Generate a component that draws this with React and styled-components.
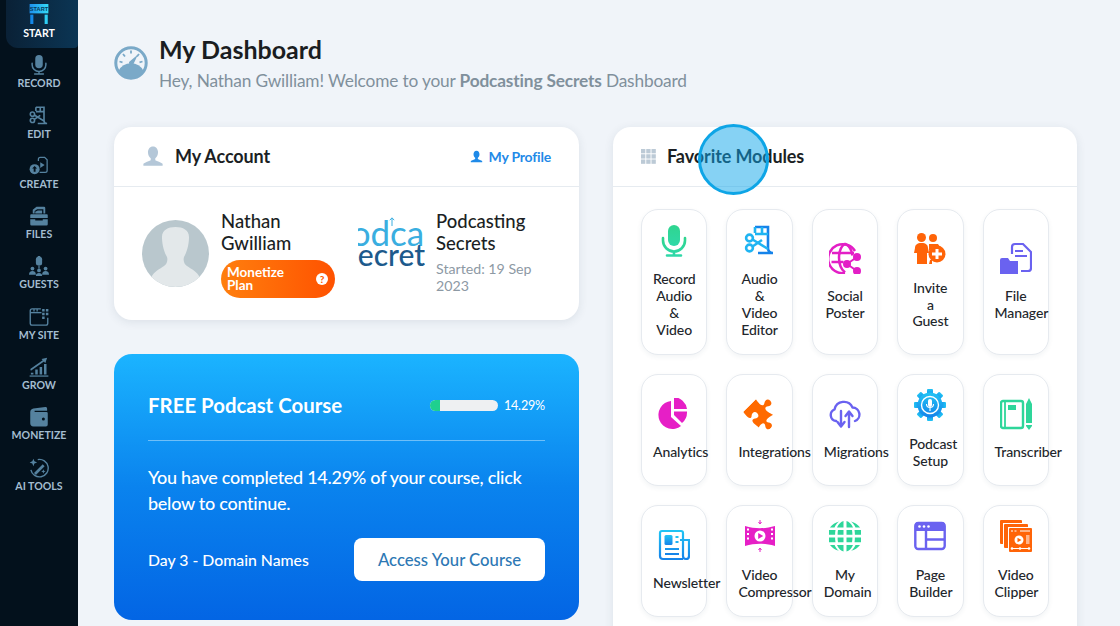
import React from "react";
import styled, { createGlobalStyle } from "styled-components";
import { FaPuzzlePiece } from "react-icons/fa";

const FONT = `"Lato", "Noto Sans", sans-serif`;

const Global = createGlobalStyle`
  html, body { margin: 0; padding: 0; height: 100%; overflow: hidden; background: #f0f4f9; }
  * { box-sizing: border-box; }
  body { font-family: ${FONT}; color: #1b1f24; }
`;

const Page = styled.div`display: flex; height: 626px; width: 1120px; overflow: hidden; position: relative;`;
const Sidebar = styled.nav`width: 78px; flex: none; background: #03111c; display: flex; flex-direction: column;`;
const NavItem = styled.div`
  position: relative; height: 50.3px; padding-top: ${p => (p.$active ? 4 : 5)}px;
  display: flex; flex-direction: column; align-items: center;
  color: ${p => (p.$active ? "#ffffff" : "#a3bdd0")};
  &::before {
    content: ""; display: ${p => (p.$active ? "block" : "none")};
    position: absolute; left: 6px; right: 0; top: 0; height: 48px;
    border-radius: 0 0 4px 12px; background: linear-gradient(90deg, #0a2136, #0b3554);
  }
`;
const NavIcon = styled.svg`width: 20px; height: 20px; position: relative; flex: none; margin-bottom: ${p => (p.$active ? 2 : 1)}px;`;
const NavLabel = styled.span`position: relative; font-size: 10.6px; line-height: 14px; font-weight: 700; white-space: nowrap;`;

const Main = styled.main`flex: 1; min-width: 0; padding: 34px 43px 0 36px;`;
const Header = styled.header`display: flex; align-items: center; gap: 11px; margin-bottom: 35px;`;
const HeaderText = styled.div`display: flex; flex-direction: column; gap: 6px;`;
const Title = styled.h1`margin: 0; font-size: 25px; line-height: 30px; font-weight: 700; color: #1a1d21;`;
const Subtitle = styled.p`margin: 0; font-size: 17.3px; line-height: 22px; letter-spacing: -0.16px; color: #80909c; b { font-weight: 700; }`;
const Gauge = styled.svg`width: 34px; height: 34px; flex: none;`;

const Columns = styled.div`display: grid; grid-template-columns: 465px 464px; gap: 34px; align-items: start;`;
const LeftCol = styled.div`display: flex; flex-direction: column; gap: 34px;`;
const Card = styled.section`background: #fff; border-radius: 18px; box-shadow: 0 2px 10px rgba(40,60,80,.1);`;
const CardHead = styled.div`
  height: 60px; padding: 0 28px 1px; display: flex; align-items: center; gap: 11px;
  border-bottom: 1px solid #e6ebf0;
`;
const CardTitle = styled.h2`margin: 0; flex: 1; font-size: 18px; letter-spacing: -0.1px; font-weight: 700; color: #1b1f24;`;
const ProfileLink = styled.a`display: flex; align-items: center; gap: 6px; font-size: 14px; letter-spacing: -0.2px; font-weight: 700; color: #1f8ae8;`;
const HeadIcon = styled.svg`width: ${p => p.$s || 22}px; height: ${p => p.$s || 22}px; flex: none;`;

const AccountBody = styled.div`display: grid; grid-template-columns: 204px 1fr; column-gap: 12px; padding: 22px 28px 22px;`;
const Person = styled.div`display: flex; align-items: ${p => p.$align || "center"}; gap: ${p => p.$gap}px; min-width: 0;`;
const Avatar = styled.svg`width: 67px; height: 67px; border-radius: 50%; flex: none;`;
const PersonInfo = styled.div`min-width: 0; display: flex; flex-direction: column; padding-top: 1px;`;
const PersonName = styled.div`font-size: 18.5px; line-height: 22px; font-weight: 500; color: #1b1f24;`;
const PlanBadge = styled.div`
  margin-top: 6px; width: 114px; height: 38px; border-radius: 19px; padding: 0 7px 0 6px;
  display: flex; align-items: center; justify-content: space-between;
  background: linear-gradient(90deg, #ff7f0e, #ff5200);
  color: #fff; font-size: 13.5px; line-height: 13.5px; font-weight: 700;
`;
const HelpDot = styled.span`
  width: 12px; height: 12px; border-radius: 50%; background: #fff; color: #ff5a00;
  font-size: 10px; line-height: 12px; font-weight: 900; text-align: center; flex: none;
`;
const Logo = styled.div`
  position: relative; width: 67px; height: 67px; flex: none; overflow: hidden;
  display: flex; flex-direction: column; align-items: center; justify-content: center;
`;
const LogoWord = styled.span`font-size: ${p => p.$s}px; line-height: 22px; font-weight: ${p => p.$w}; color: ${p => p.$c}; white-space: nowrap;`;
const LogoArrow = styled.svg`position: absolute; left: 31px; top: 8px; width: 6px; height: 9px;`;
const Started = styled.div`margin-top: 5.5px; font-size: 14.2px; line-height: 17px; color: #8d99a4;`;

const Course = styled.section`
  height: 266px; border-radius: 18px; padding: 37px 34px 0; color: #fff;
  background: linear-gradient(180deg, #1bb4ff 0%, #0a83ee 50%, #0365e4 100%);
`;
const CourseTop = styled.div`
  display: flex; align-items: center; height: 50px; padding-bottom: 21px;
  border-bottom: 1px solid rgba(255,255,255,.4);
`;
const CourseTitle = styled.h2`margin: 0; flex: 1; font-size: 20.4px; font-weight: 700;`;
const Track = styled.div`width: 68px; height: 11px; border-radius: 6px; background: #eef0f2; overflow: hidden;`;
const Fill = styled.div`height: 100%; background: #1fd08f;`;
const Percent = styled.span`margin-left: 6px; font-size: 12.6px; letter-spacing: -0.2px;`;
const CourseText = styled.p`margin: 23px 0 22px; font-size: 18px; letter-spacing: -0.27px; line-height: 26px; font-weight: 500;`;
const CourseFoot = styled.div`display: flex; align-items: center; justify-content: space-between;`;
const Day = styled.span`font-size: 15.8px; font-weight: 500;`;
const AccessButton = styled.button`
  width: 191px; height: 43px; border: 0; border-radius: 8px; background: #fff; color: #2d78b4;
  font-family: ${FONT}; font-size: 16.7px; font-weight: 500;
`;

const Modules = styled.div`
  display: grid; grid-template-columns: repeat(5, 1fr); column-gap: 19px; row-gap: 19px; padding: 22px 28px 30px;
`;
const Tile = styled.div`
  border: 1px solid #e6eaef; border-radius: 17px; padding: 14.9px 11px;
  display: flex; flex-direction: column; align-items: center; justify-content: center;
  box-shadow: 0 2px 5px rgba(40,60,80,.06); background: #fff; min-width: 0;
`;
const TileIcon = styled.svg`width: 32px; height: 32px; flex: none; margin-bottom: 14.6px;`;
const PuzzleWrap = styled.span`
  width: 32px; height: 32px; flex: none; margin-bottom: 14.6px; color: #ff6a00; font-size: 31px;
  display: flex; align-items: center; justify-content: center; svg { transform: translateX(4px) rotate(45deg); }
`;
const TileLabel = styled.div`width: 100%; font-size: 14px; line-height: 16.8px; letter-spacing: -0.1px; font-weight: 500; color: #22262b; text-align: center;`;
const Line = styled.span`display: block; white-space: nowrap;`;

const Pointer = styled.div`
  position: absolute; left: 698px; top: 124px; width: 71px; height: 71px; border-radius: 50%;
  border: 3px solid #0ea5e6; background: rgba(14,165,233,.5);
`;
const Defs = styled.svg`position: absolute; width: 0; height: 0;`;

/* ---------- drawings ---------- */
const Mic = ({ c, s = 2.4 }) => (
  <g>
    <rect x="10" y="0" width="12" height="21" rx="6" fill={c} />
    <path d="M5 13v2.5a11 11 0 0 0 22 0V13M16 26.5V30M9 30.5h14" fill="none" stroke={c} strokeWidth={s} strokeLinecap="round" />
  </g>
);
const EditDoc = ({ c, c2 = c }) => (
  <g fill="none" stroke={c} strokeWidth="2.6">
    <path d="M11 2h13v21c0 3 2 5 5 5H14" stroke={c2} />
    <path d="M11 2v6M11 9h13M18 2v7" />
    <circle cx="5.5" cy="13" r="3.4" />
    <circle cx="5.5" cy="23" r="3.4" />
    <path d="M8.5 14.5L24 24M8.5 21.5L18 15" />
  </g>
);
const Create = ({ c }) => (
  <g>
    <path d="M15 8V5a3 3 0 0 1 3-3h7l4 4v17a3 3 0 0 1-3 3H17" fill="none" stroke={c} strokeWidth="2" />
    <path d="M18 10l7 4.5-7 4.5z" fill={c} />
    <circle cx="9" cy="21" r="8" fill={c} />
    <path d="M9 16l4 4h-2.5v5h-3v-5H5z" fill="#03111c" />
  </g>
);
const Files = ({ c }) => (
  <g fill={c}>
    <path d="M6 12V6l6-5h12a2 2 0 0 1 2 2v9h-3V5H13l-4 3v4z" />
    <path d="M10 9l4-2h7v5H10z" />
    <path d="M3 13h26a2 2 0 0 1 1 2v4H2v-4a2 2 0 0 1 1-2z" />
    <path d="M2 21h8v2h12v-2h8v8a2 2 0 0 1-2 2H4a2 2 0 0 1-2-2z" />
  </g>
);
const Guests = ({ c }) => (
  <g fill={c}>
    <rect x="11" y="1" width="10" height="14" rx="4" />
    <path d="M14 0h4v2h-4z" />
    <circle cx="5.5" cy="20" r="3" /><path d="M0 30c0-4 2-6 5.5-6s5.5 2 5.5 6z" />
    <circle cx="26.5" cy="20" r="3" /><path d="M21 30c0-4 2-6 5.5-6s5.5 2 5.5 6z" />
    <circle cx="16" cy="23" r="3" /><path d="M11 32c0-4 2-5 5-5s5 1 5 5z" />
    <path d="M15 15h2v5h-2z" />
  </g>
);
const Site = ({ c }) => (
  <g>
    <path d="M30 17v9a3 3 0 0 1-3 3H5a3 3 0 0 1-3-3V6a3 3 0 0 1 3-3h14" fill="none" stroke={c} strokeWidth="2.2" />
    <path d="M2 9h18" stroke={c} strokeWidth="2.2" />
    <path d="M7 3h2v4H7zM12 3h2v4h-2z" fill={c} />
    <path d="M21 3h4v4h-4zM27 3h4v4h-4zM21 9h4v4h-4zM27 9h4v4h-4zM21 15h4v4h-4z" fill={c} />
  </g>
);
const Grow = ({ c }) => (
  <g fill={c}>
    <path d="M2 19L22 5l-2-2 9-2-3 9-2-3L3 22z" />
    <path d="M3 25h4v3H3zM10 20h4v8h-4zM17 16h4v12h-4zM24 11h4v17h-4z" />
    <path d="M1 29.5h30v2H1z" />
  </g>
);
const Wallet = ({ c }) => (
  <g>
    <path d="M2 8c0-3 2-5 5-5.5L26 0c2 0 3 1 3 3v3H9v2h19a2 2 0 0 1 2 2v18a3 3 0 0 1-3 3H7a5 5 0 0 1-5-5z" fill={c} />
    <circle cx="23" cy="19" r="2.4" fill="#03111c" />
  </g>
);
const AiTools = ({ c }) => (
  <g>
    <path d="M14 2.5A14 14 0 1 1 3 19" fill="none" stroke={c} strokeWidth="2.2" />
    <path d="M8 24L22 10l3 3L11 27z" fill={c} />
    <path d="M7 1l1.7 4.3L13 7l-4.3 1.7L7 13 5.3 8.7 1 7l4.3-1.7zM23 18l1 2.5 2.500 1-2.500 1-1 2.500-1-2.500-2.500-1 2.500-1z" fill={c} />
  </g>
);
const StartSign = () => (
  <g>
    <rect x="1" y="0" width="30" height="15" fill="url(#gCyan)" />
    <text x="16" y="11" fontSize="9" fontWeight="700" fill="#053a5c" textAnchor="middle" fontFamily="Liberation Sans Narrow, Liberation Sans, sans-serif">START</text>
    <rect x="2" y="17" width="5" height="15" fill="#1588e8" />
    <rect x="25" y="17" width="5" height="15" fill="#2fd0f5" />
  </g>
);
const SocialGlobe = ({ c }) => (
  <g fill="none" stroke={c} strokeWidth="2.5">
    <path d="M26 9A14.500 14.500 0 1 0 16 31" />
    <path d="M16 1.500c-8 6-8 22 0 29M16 1.500c5 3 7 8 7.500 12" />
    <path d="M3 11h22M2.500 20h12" />
    <g fill={c} stroke="none">
      <circle cx="28" cy="15" r="4" /><circle cx="18" cy="22" r="4" /><circle cx="28" cy="29" r="4" />
    </g>
    <path d="M28 15l-10 7 10 7" strokeWidth="2" />
  </g>
);
const InviteGuest = ({ c }) => (
  <g fill={c}>
    <circle cx="7.500" cy="4.500" r="4.500" />
    <circle cx="19" cy="5" r="4" />
    <path d="M1 15c0-3 2-5 6.500-5s6.500 2 6.500 5l1 5-2 0v11H3V20H0z" />
    <path d="M15 11h9l2 3h-7l-4 4z" />
    <path d="M16 27h2v4h-3z" />
    <circle cx="23" cy="21" r="8.500" />
    <path d="M21.500 16h3v3.500H28v3h-3.500V26h-3v-3.500H18v-3h3.500z" fill="#fff" />
  </g>
);
const FileMgr = ({ c }) => (
  <g>
    <path d="M12 12V5a3 3 0 0 1 3-3h8l8 8v16a3 3 0 0 1-3 3h-7" fill="none" stroke={c} strokeWidth="2.2" />
    <path d="M15 9h8M15 14h12" stroke={c} strokeWidth="2.2" />
    <path d="M0 18a2 2 0 0 1 2-2h6l2 3h8v13H0z" fill={c} />
  </g>
);
const Pie = ({ c }) => (
  <g fill={c}>
    <path d="M13 4v16l10 9A14 14 0 1 1 13 4z" transform="translate(0 -1)" />
    <path d="M16 0a14 14 0 0 1 13 12H16zM16 14.500h13A14 14 0 0 1 24 26l-8-8z" transform="translate(0 -1)" />
  </g>
);
const CloudSync = ({ c }) => (
  <g fill="none" stroke={c} strokeWidth="2.4" strokeLinecap="round" strokeLinejoin="round">
    <path d="M7 23A6 6 0 0 1 5.500 11.500 9.500 9.500 0 0 1 23.500 9.500 7 7 0 0 1 26 23" />
    <path d="M12 13v15M8.500 24l3.500 4.500 3.500-4.500M20 29V14M16.500 18l3.500-4.500 3.500 4.500" />
  </g>
);
const GearMic = ({ c }) => (
  <g>
    {[0, 45, 90, 135, 180, 225, 270, 315].map(a => (
      <rect key={a} x="13" y="0" width="6" height="7" rx="1" fill={c} transform={`rotate(${a} 16 16)`} />
    ))}
    <circle cx="16" cy="16" r="12.500" fill={c} />
    <circle cx="16" cy="16" r="8.500" fill="none" stroke="#fff" strokeWidth="1.4" />
    <rect x="14" y="10" width="4" height="8" rx="2" fill="#fff" />
    <path d="M12.500 15a3.500 3.500 0 0 0 7 0M16 18.500V22" fill="none" stroke="#fff" strokeWidth="1.100" />
  </g>
);
const Transcriber = ({ c }) => (
  <g>
    <path d="M3 3h18a2 2 0 0 1 2 2v23a2 2 0 0 1-2 2H3a2 2 0 0 1-2-2V5a2 2 0 0 1 2-2z" fill="none" stroke={c} strokeWidth="2.400" />
    <path d="M5 3v27" stroke={c} strokeWidth="1.800" />
    <rect x="8" y="7" width="8" height="5" fill={c} />
    <path d="M26 6l3-6 3 6v19h-6zM26 27h6v1l-3 4-3-4z" fill={c} />
  </g>
);
const News = ({ c }) => (
  <g>
    <path d="M25 30H5a3 3 0 0 1-3-3V4a2 2 0 0 1 2-2h19a2 2 0 0 1 2 2v23a3 3 0 0 0 6 0V11h-9" fill="none" stroke={c} strokeWidth="2.200" />
    <rect x="6.500" y="6" width="8" height="10" rx="1.500" fill={c} />
    <path d="M17.500 8h3M17.500 13h3M7 20h14M7 25h14" stroke={c} strokeWidth="2" />
  </g>
);
const Compress = ({ c }) => (
  <g>
    <path d="M1 6c10 3 20 3 30 0v20c-10-3-20-3-30 0z" fill={c} />
    <g fill="#fff">
      {[9.500, 14, 18.500].map(y => <rect key={"a" + y} x="3" y={y - 1} width="2" height="2" />)}
      {[9.500, 14, 18.500].map(y => <rect key={"b" + y} x="27" y={y - 1} width="2" height="2" />)}
    </g>
    <circle cx="16" cy="16" r="5.500" fill="#fff" />
    <path d="M14.200 13l5 3-5 3z" fill={c} />
    <path d="M16 0v3M14.500 2L16 4l1.500-2M16 32v-3M14.500 30l1.500-2 1.500 2" fill="none" stroke={c} strokeWidth="1" />
  </g>
);
const DomainGlobe = ({ c }) => (
  <g fill={c}>
    <path d="M14.500 1v6.500H8C9.500 4 12 1.600 14.500 1zM17.500 1c2.500.6 5 3 6.500 6.500h-6.500zM5.500 7.500H.9A16 16 0 0 1 10 1.500C8 3 6.500 5 5.500 7.500zM26.500 7.500h4.600A16 16 0 0 0 22 1.500c2 1.500 3.500 3.500 4.500 6z" />
    <path d="M0 10h6.500c-.3 1.800-.4 3.500-.4 4.800H0zM9 10h5.500v4.800H8.600c0-1.600.1-3.200.4-4.800zM17.500 10H23c.3 1.600.4 3.200.4 4.800h-5.900zM25.500 10H32v4.800h-6.100c0-1.300-.1-3-.4-4.800z" />
    <path d="M0 17.500h6.100c0 1.500.1 3.100.4 4.700H0zM8.600 17.500h5.900v4.700H9c-.3-1.500-.4-3.100-.4-4.700zM17.500 17.500h5.900c0 1.600-.1 3.200-.4 4.700h-5.500zM25.900 17.500H32v4.700h-6.500c.3-1.600.4-3.200.4-4.700z" />
    <path d="M1 25h4.600c1 2.500 2.400 4.500 4.400 5.800A16 16 0 0 1 1 25zM8 25h6.500v6.500C12 31 9.500 28.500 8 25zM17.500 25H24c-1.500 3.500-4 6-6.500 6.500zM26.500 25H31a16 16 0 0 1-9 5.800c2-1.300 3.400-3.300 4.500-5.800z" />
  </g>
);
const PageB = ({ c }) => (
  <g>
    <rect x="1.300" y="3" width="29.400" height="26" rx="3" fill="none" stroke={c} strokeWidth="2.400" />
    <path d="M1 5a3 3 0 0 1 3-3h24a3 3 0 0 1 3 3v6H1z" fill={c} />
    <g fill="#fff"><circle cx="5.500" cy="6.500" r="1.300" /><circle cx="10" cy="6.500" r="1.300" /><circle cx="14.500" cy="6.500" r="1.300" /></g>
    <path d="M12 11v18M12 19.500h19" stroke={c} strokeWidth="2.400" />
  </g>
);
const Clipper = ({ c }) => (
  <g>
    <rect x="0" y="0" width="22" height="24" rx="1" fill={c} />
    <rect x="3" y="3" width="26" height="26" fill="#fff" />
    <rect x="4" y="4" width="24" height="24" rx="1" fill={c} />
    <rect x="8" y="7" width="24" height="25" fill="#fff" />
    <rect x="9" y="8" width="23" height="24" rx="1" fill={c} />
    <path d="M11 11h2M14.500 11h2M20 11h10" stroke="#fff" strokeWidth="1" />
    <circle cx="19" cy="20" r="4.500" fill="#fff" />
    <path d="M17.500 17.700l4 2.300-4 2.300z" fill={c} />
    <rect x="26" y="15" width="3.500" height="9" fill="#ffb48a" />
    <path d="M11 28.500h19" stroke="#fff" strokeWidth="1" />
    <circle cx="12" cy="28.500" r="1.300" fill="#fff" /><circle cx="20" cy="28.500" r="1.300" fill="#fff" /><circle cx="29" cy="28.500" r="1.300" fill="#fff" />
  </g>
);

const NAV_BLUE = "#55829f";
const nav = [
  { label: "START", active: true, draw: <StartSign /> },
  { label: "RECORD", draw: <Mic c={NAV_BLUE} /> },
  { label: "EDIT", draw: <EditDoc c={NAV_BLUE} /> },
  { label: "CREATE", draw: <Create c={NAV_BLUE} /> },
  { label: "FILES", draw: <Files c={NAV_BLUE} /> },
  { label: "GUESTS", draw: <Guests c={NAV_BLUE} /> },
  { label: "MY SITE", draw: <Site c={NAV_BLUE} /> },
  { label: "GROW", draw: <Grow c={NAV_BLUE} /> },
  { label: "MONETIZE", draw: <Wallet c={NAV_BLUE} /> },
  { label: "AI TOOLS", draw: <AiTools c={NAV_BLUE} /> },
];

const modules = [
  { lines: ["Record", "Audio", "&", "Video"], draw: <Mic c="url(#gGreen)" s={2.6} /> },
  { lines: ["Audio", "&", "Video", "Editor"], draw: <EditDoc c="#1fb4f2" c2="#1583ea" /> },
  { lines: ["Social", "Poster"], draw: <SocialGlobe c="#e31fc6" /> },
  { lines: ["Invite", "a", "Guest"], draw: <InviteGuest c="#ff6408" /> },
  { lines: ["File", "Manager"], draw: <FileMgr c="#6a62f0" /> },
  { lines: ["Analytics"], draw: <Pie c="#e61fc6" /> },
  { lines: ["Integrations"], puzzle: true },
  { lines: ["Migrations"], draw: <CloudSync c="#6a62f0" /> },
  { lines: ["Podcast", "Setup"], draw: <GearMic c="url(#gBlue)" /> },
  { lines: ["Transcriber"], draw: <Transcriber c="#2ed69a" /> },
  { lines: ["Newsletter"], draw: <News c="url(#gBlue)" /> },
  { lines: ["Video", "Compressor"], draw: <Compress c="#e61fc6" /> },
  { lines: ["My", "Domain"], draw: <DomainGlobe c="#2ed69a" /> },
  { lines: ["Page", "Builder"], draw: <PageB c="#6a62f0" /> },
  { lines: ["Video", "Clipper"], draw: <Clipper c="#ff6408" /> },
];

const PersonGlyph = ({ c }) => (
  <path d="M12 1.500c3.500 0 5.500 3 5.500 6.500 0 3-1.500 5.500-3 6.500v2c2 1 6 2 8 4v2H1.500v-2c2-2 6-3 8-4v-2c-1.500-1-3-3.500-3-6.500 0-3.500 2-6.500 5.500-6.500z" fill={c} />
);

export default function App() {
  return (
    <Page>
      <Global />
      <Defs aria-hidden="true">
        <defs>
          <linearGradient id="gGreen" x1="0" y1="0" x2="0" y2="1"><stop offset="0" stopColor="#2fd58f" /><stop offset="1" stopColor="#2fd8a8" /></linearGradient>
          <linearGradient id="gBlue" x1="0" y1="0" x2="0" y2="1"><stop offset="0" stopColor="#20c4f4" /><stop offset="1" stopColor="#1583ea" /></linearGradient>
          <linearGradient id="gCyan" x1="0" y1="0" x2="1" y2="0"><stop offset="0" stopColor="#1e90ee" /><stop offset="1" stopColor="#34dcf8" /></linearGradient>
        </defs>
      </Defs>
      <Sidebar>
        {nav.map(n => (
          <NavItem key={n.label} $active={n.active}>
            <NavIcon $active={n.active} viewBox="0 0 32 32">{n.draw}</NavIcon>
            <NavLabel>{n.label}</NavLabel>
          </NavItem>
        ))}
      </Sidebar>
      <Main>
        <Header>
          <Gauge viewBox="0 0 34 34">
            <circle cx="17" cy="17" r="15.200" fill="none" stroke="#7aa9c8" strokeWidth="3" />
            <path d="M4.500 25a14 14 0 0 1 25 0c-2 3.500-7 7-12.500 7S6.500 28.500 4.500 25z" fill="#7aa9c8" />
            <path d="M17 4.500v3M9 8l2 2.500M25 8l-2 2.500M5.500 15.500l3 .8M28.500 15.500l-3 .8" stroke="#7aa9c8" strokeWidth="1.800" />
            <path d="M24 8.500L19 19a2.800 2.800 0 0 1-4-3z" fill="#7aa9c8" />
          </Gauge>
          <HeaderText>
            <Title>My Dashboard</Title>
            <Subtitle>Hey, Nathan Gwilliam! Welcome to your <b>Podcasting Secrets</b> Dashboard</Subtitle>
          </HeaderText>
        </Header>
        <Columns>
          <LeftCol>
            <Card>
              <CardHead>
                <HeadIcon viewBox="0 0 24 24"><PersonGlyph c="#b4c7d8" /></HeadIcon>
                <CardTitle>My Account</CardTitle>
                <ProfileLink>
                  <HeadIcon $s={13} viewBox="0 0 24 24"><PersonGlyph c="#1f8ae8" /></HeadIcon>
                  My Profile
                </ProfileLink>
              </CardHead>
              <AccountBody>
                <Person $gap={12}>
                  <Avatar viewBox="0 0 67 67">
                    <rect width="67" height="67" fill="#b9c7cd" />
                    <path d="M20 17c0-7 6-10 13.500-10S47 10 47 17c0 5-1 13-5 20-1 3 0 7 3 9 4 3 10 5 13 12-6 6-15 9-24.500 9S15 64 9 58c3-7 9-9 13-12 3-2 4-6 3-9-4-7-5-15-5-20z" fill="#e3e8ea" />
                  </Avatar>
                  <PersonInfo>
                    <PersonName>Nathan<br />Gwilliam</PersonName>
                    <PlanBadge>
                      <span>Monetize<br />Plan</span>
                      <HelpDot>?</HelpDot>
                    </PlanBadge>
                  </PersonInfo>
                </Person>
                <Person $gap={11} $align="flex-start">
                  <Logo>
                    <LogoWord $s={35} $c="#3aaee0" $w={400}>podcast</LogoWord>
                    <LogoWord $s={30} $c="#1d5a8c" $w={500}>secrets</LogoWord>
                    <LogoArrow viewBox="0 0 6 9"><path d="M3 9V1M.8 3.200L3 .8l2.200 2.400" fill="none" stroke="#3aaee0" strokeWidth="1" /></LogoArrow>
                  </Logo>
                  <PersonInfo>
                    <PersonName>Podcasting<br />Secrets</PersonName>
                    <Started>Started: 19 Sep<br />2023</Started>
                  </PersonInfo>
                </Person>
              </AccountBody>
            </Card>
            <Course>
              <CourseTop>
                <CourseTitle>FREE Podcast Course</CourseTitle>
                <Track><Fill style={{ width: "14.29%" }} /></Track>
                <Percent>14.29%</Percent>
              </CourseTop>
              <CourseText>You have completed 14.29% of your course, click below to continue.</CourseText>
              <CourseFoot>
                <Day>Day 3 - Domain Names</Day>
                <AccessButton>Access Your Course</AccessButton>
              </CourseFoot>
            </Course>
          </LeftCol>
          <Card>
            <CardHead>
              <HeadIcon $s={15} viewBox="0 0 16 16">
                {[0, 1, 2].flatMap(r => [0, 1, 2].map(k => (
                  <rect key={`${r}${k}`} x={k * 5.6} y={r * 5.6} width="4.600" height="4.600" fill="#bccad6" />
                )))}
              </HeadIcon>
              <CardTitle>Favorite Modules</CardTitle>
            </CardHead>
            <Modules>
              {modules.map(m => (
                <Tile key={m.lines.join(" ")}>
                  {m.puzzle
                    ? <PuzzleWrap><FaPuzzlePiece /></PuzzleWrap>
                    : <TileIcon viewBox="0 0 32 32">{m.draw}</TileIcon>}
                  <TileLabel>{m.lines.map(l => <Line key={l}>{l}</Line>)}</TileLabel>
                </Tile>
              ))}
            </Modules>
          </Card>
        </Columns>
      </Main>
      <Pointer />
    </Page>
  );
}
